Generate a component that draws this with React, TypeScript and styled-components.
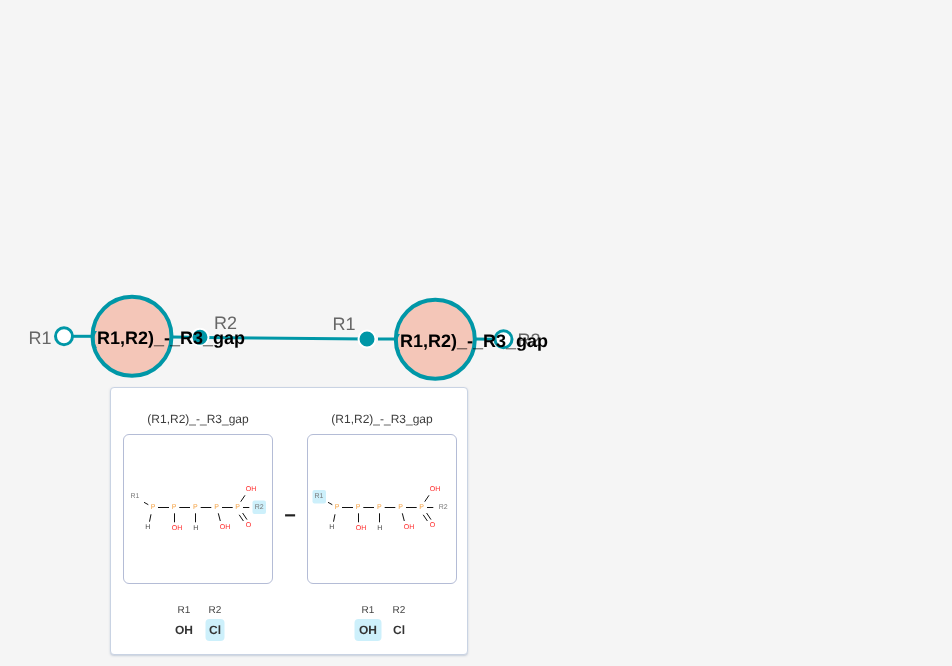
import React from "react";
import styled, { createGlobalStyle } from "styled-components";

const Global = createGlobalStyle`
  html, body { margin: 0; padding: 0; background: #f5f5f5; }
  body { font-family: "Liberation Sans", Arial, sans-serif; text-rendering: geometricPrecision; }
`;

const Page = styled.div`
  position: relative;
  width: 952px;
  height: 666px;
  overflow: hidden;
  background: #f5f5f5;
`;

const Graph = styled.svg`
  position: absolute;
  left: 0;
  top: 0;
  display: block;
  will-change: transform;
`;

const Card = styled.div`
  position: absolute;
  left: 110px;
  top: 387px;
  box-sizing: border-box;
  width: 358px;
  height: 268px;
  display: flex;
  align-items: flex-start;
  padding: 24px 10px 0 12px;
  background: #fff;
  border: 1px solid #c9d3e3;
  border-radius: 4px;
  box-shadow: 0 1px 2px rgba(150, 165, 190, 0.5);
  will-change: transform;
`;

const Side = styled.div`
  width: 150px;
  display: flex;
  flex-direction: column;
  align-items: center;
`;

const Title = styled.div`
  font-size: 12px;
  line-height: 14px;
  color: #3d3d3d;
  margin-bottom: 8px;
  white-space: nowrap;
`;

const MolBox = styled.div`
  box-sizing: border-box;
  width: 150px;
  height: 150px;
  border: 1px solid #b4bcd6;
  border-radius: 6px;
  background: #fff;
`;

const Minus = styled.div`
  width: 34px;
  padding-top: 92px;
  text-align: center;
  font-size: 20px;
  font-weight: 700;
  line-height: 24px;
  color: #222;
`;

const Groups = styled.div`
  display: grid;
  grid-template-columns: auto auto;
  column-gap: 8px;
  justify-items: center;
  margin-top: 21px;
  transform: translateX(-0.5px);
`;

const GroupName = styled.div`
  font-size: 10px;
  line-height: 12px;
  color: #444;
  margin-bottom: 2px;
`;

const GroupValue = styled.div<{ $on?: boolean; $pad: number }>`
  font-size: 12px;
  font-weight: 700;
  line-height: 22px;
  color: #333;
  padding: 0 ${(p) => p.$pad}px;
  border-radius: 4px;
  background: ${(p) => (p.$on ? "#cdf0fb" : "transparent")};
`;

const TEAL = "#0097a7";
const FONT = '"Liberation Sans", Arial, sans-serif';

const Bond = ({ d }: { d: number[] }) => (
  <line x1={d[0]} y1={d[1]} x2={d[2]} y2={d[3]} stroke="#111" strokeWidth={1} />
);

const Atom = ({ x, y, c, t }: { x: number; y: number; c: string; t: string }) => (
  <text x={x} y={y} fill={c} fontSize={7} textAnchor="middle" dominantBaseline="central" fontFamily={FONT}>
    {t}
  </text>
);

const Molecule = ({ hl }: { hl: "R1" | "R2" }) => {
  const P = "#f5a54a";
  const R = "#ff2a2a";
  const G = "#777";
  const K = "#444";
  const bonds = [
    [144, 502.3, 148.3, 504.7],
    [151, 514.3, 149.5, 521.7],
    [158, 507.5, 169, 507.5],
    [179.3, 507.5, 190, 507.5],
    [200.7, 507.5, 211.3, 507.5],
    [222, 507.5, 232.7, 507.5],
    [174.5, 513.3, 174.5, 522.3],
    [195.5, 513.3, 195.5, 522.3],
    [218.3, 513.3, 220.3, 521],
    [240.7, 501.7, 245, 495.3],
    [243, 507.5, 249.3, 507.5],
    [239.2, 514.8, 243.4, 521],
    [242.6, 513, 247, 519.6],
  ];
  return (
    <svg width={148} height={148} style={{ display: "block" }}>
      <g transform="translate(-124 -435)">
        {hl === "R1" ? (
          <rect x={128.5} y={490} width={13.5} height={13.5} rx={2} fill="#cdf0fb" />
        ) : (
          <rect x={252.5} y={500.5} width={13.5} height={13.5} rx={2} fill="#cdf0fb" />
        )}
        {bonds.map((b, i) => (
          <Bond key={i} d={b} />
        ))}
        {[153, 174, 195.3, 216.7, 237.7].map((x) => (
          <Atom key={x} x={x} y={507.3} c={P} t="P" />
        ))}
        <Atom x={135} y={496.7} c={G} t="R1" />
        <Atom x={259.2} y={507.3} c={G} t="R2" />
        <Atom x={147.8} y={527.3} c={K} t="H" />
        <Atom x={195.7} y={528.7} c={K} t="H" />
        <Atom x={177} y={528.7} c={R} t="OH" />
        <Atom x={225} y={527.3} c={R} t="OH" />
        <Atom x={251} y={489.5} c={R} t="OH" />
        <Atom x={248.4} y={525.3} c={R} t="O" />
      </g>
    </svg>
  );
};

const NodeLabel = ({ x, y, t }: { x: number; y: number; t: string }) => (
  <text x={x} y={y} fill="#666" fontSize={18} textAnchor="middle" dominantBaseline="central" fontFamily={FONT}>
    {t}
  </text>
);

const Name = ({ x, y }: { x: number; y: number }) => (
  <text x={x} y={y} fill="#000" fontSize={18} fontWeight={700} textAnchor="middle" dominantBaseline="central" fontFamily={FONT}>
    <tspan fill={TEAL}>(</tspan>R1,R2)_-_R3_gap
  </text>
);

const Side1 = ({ hl }: { hl: "R1" | "R2" }) => (
  <Side>
    <Title>(R1,R2)_-_R3_gap</Title>
    <MolBox>
      <Molecule hl={hl} />
    </MolBox>
    <Groups>
      <GroupName>R1</GroupName>
      <GroupName>R2</GroupName>
      <GroupValue $pad={4.5} $on={hl === "R1"}>OH</GroupValue>
      <GroupValue $pad={3.5} $on={hl === "R2"}>Cl</GroupValue>
    </Groups>
  </Side>
);

export default function App() {
  return (
    <Page>
      <Global />
      <Graph width={952} height={666}>
        <line x1={73} y1={336.3} x2={92} y2={336.3} stroke={TEAL} strokeWidth={3} />
        <line x1={172} y1={337} x2={190} y2={337.3} stroke={TEAL} strokeWidth={3} />
        <line x1={200} y1={337.5} x2={367} y2={339} stroke={TEAL} strokeWidth={3} />
        <line x1={378} y1={339} x2={396} y2={339} stroke={TEAL} strokeWidth={3} />
        <line x1={475} y1={339} x2={495} y2={339.3} stroke={TEAL} strokeWidth={3} />
        <NodeLabel x={40} y={338} t="R1" />
        <NodeLabel x={225.5} y={323} t="R2" />
        <NodeLabel x={344} y={324} t="R1" />
        <NodeLabel x={529} y={340} t="R2" />
        <circle cx={64} cy={336.3} r={8.5} fill="#fff" stroke={TEAL} strokeWidth={3} />
        <circle cx={200} cy={337.3} r={8.5} fill={TEAL} stroke="#fff" strokeWidth={2} />
        <circle cx={367} cy={339} r={8.5} fill={TEAL} stroke="#fff" strokeWidth={2} />
        <circle cx={503.5} cy={339.3} r={8.5} fill="#fff" stroke={TEAL} strokeWidth={3} />
        <circle cx={132} cy={336.3} r={39.5} fill="#f4c6b8" stroke={TEAL} strokeWidth={4} />
        <circle cx={435.3} cy={339.3} r={39.5} fill="#f4c6b8" stroke={TEAL} strokeWidth={4} />
        <Name x={168} y={338} />
        <Name x={471} y={341} />
      </Graph>
      <Card>
        <Side1 hl="R2" />
        <Minus>−</Minus>
        <Side1 hl="R1" />
      </Card>
    </Page>
  );
}
